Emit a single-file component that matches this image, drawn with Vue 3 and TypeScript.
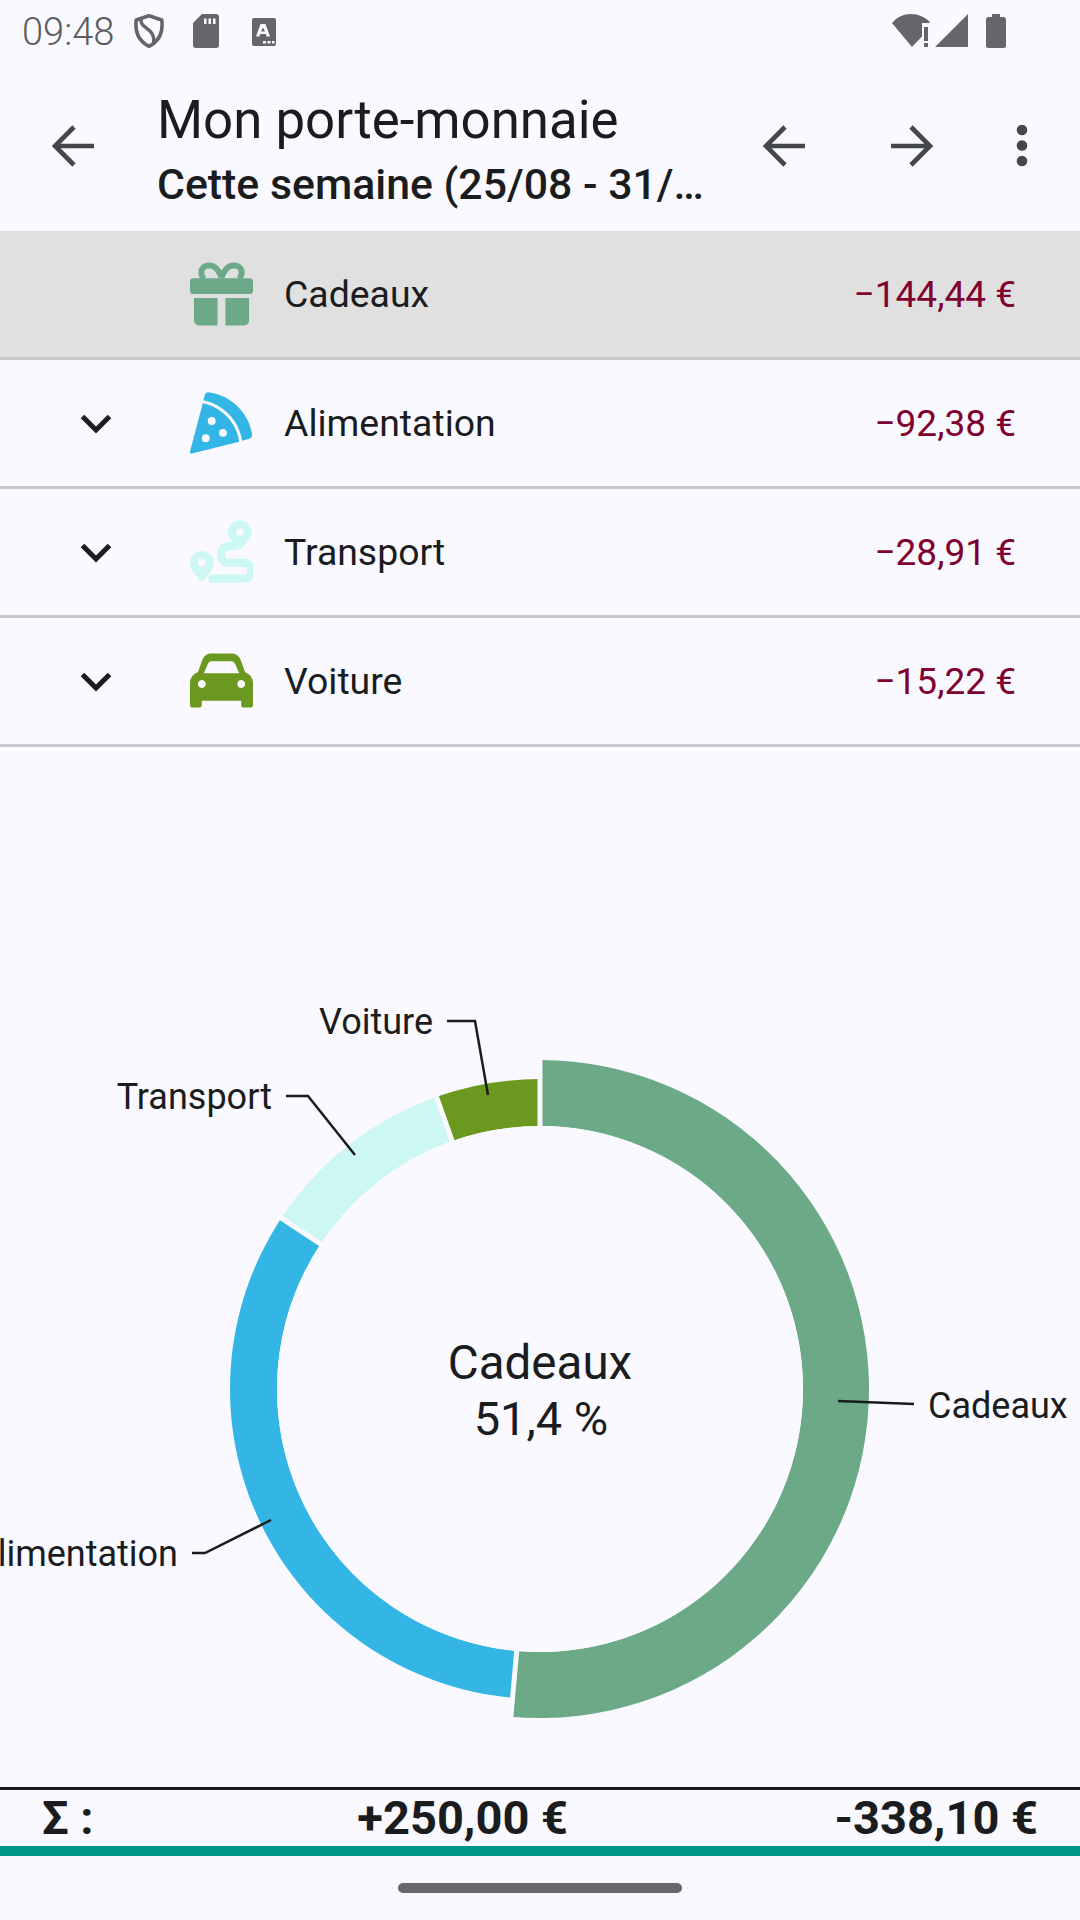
<script setup lang="ts">
interface Slice { label: string; color: string; from: number; to: number; outer: number }

const total = 144.44 + 92.38 + 28.91 + 15.22
const cx = 540
const cy = 1389
const inner = 263

function polar(r: number, deg: number): [number, number] {
  const a = (deg * Math.PI) / 180
  return [cx + r * Math.sin(a), cy - r * Math.cos(a)]
}

function sector(s: Slice): string {
  const [x1, y1] = polar(s.outer, s.from)
  const [x2, y2] = polar(s.outer, s.to)
  const [x3, y3] = polar(inner, s.to)
  const [x4, y4] = polar(inner, s.from)
  const large = s.to - s.from > 180 ? 1 : 0
  return `M${x1} ${y1}A${s.outer} ${s.outer} 0 ${large} 1 ${x2} ${y2}L${x3} ${y3}A${inner} ${inner} 0 ${large} 0 ${x4} ${y4}Z`
}

const raw = [
  { label: 'Cadeaux', color: '#6ca987', value: 144.44, outer: 329 },
  { label: 'Alimentation', color: '#33b5e5', value: 92.38, outer: 310 },
  { label: 'Transport', color: '#ccf7f3', value: 28.91, outer: 310 },
  { label: 'Voiture', color: '#6b981f', value: 15.22, outer: 310 },
]
let acc = 0
const slices: Slice[] = raw.map((r) => {
  const from = acc
  acc += (r.value / total) * 360
  return { label: r.label, color: r.color, from, to: acc, outer: r.outer }
})
const paths = slices.map((s) => ({ d: sector(s), color: s.color, key: s.label }))
const gaps = slices.map((s) => {
  const [x, y] = polar(340, s.from)
  return { x, y, key: s.label }
})

const rows = [
  { name: 'Cadeaux', amount: '−144,44 €', icon: 'gift', selected: true },
  { name: 'Alimentation', amount: '−92,38 €', icon: 'pizza', selected: false },
  { name: 'Transport', amount: '−28,91 €', icon: 'route', selected: false },
  { name: 'Voiture', amount: '−15,22 €', icon: 'car', selected: false },
]
</script>

<template>
  <div class="page">
    <header class="status">
      <span class="time">09:48</span>
      <svg class="st shield" viewBox="0 0 30 34"><path d="M15 1.800 27.800 6C29 16 27.500 26 15 32.300 2.500 26 1 16 2.200 6Z" fill="none" stroke="#66666a" stroke-width="3.600" stroke-linejoin="round"/><path d="M7 5C5.500 15 22 13 19.500 30" fill="none" stroke="#66666a" stroke-width="3.400"/></svg>
      <svg class="st sd" viewBox="0 0 26 34"><path d="M9 0H23a3 3 0 0 1 3 3V31a3 3 0 0 1-3 3H3a3 3 0 0 1-3-3V9Z" fill="#66666a"/><path d="M11 4.500h2.500V10H11zM15.500 4.500H18V10h-2.500zM20 4.500h2.500V10H20z" fill="#f9f9ff"/></svg>
      <svg class="st acc" viewBox="0 0 24 28"><rect width="24" height="28" rx="2" fill="#66666a"/><path d="M8.500 6h5L18 18.500h-3.400l-.8-2.500H8.200l-.8 2.500H4Zm2.500 3.500L9 13.500h4Z" fill="#f9f9ff"/><path d="M11 23h3v2.500h-3zM15.500 23h3v2.500h-3zM20 23h2.500v2.500H20z" fill="#f9f9ff"/></svg>
      <span class="spacer"></span>
      <svg class="st wifi" viewBox="0 0 40 33"><path d="M0 9C5 3 12 0 19 0C26 0 33 3 38 8L37 9H30V22.500L20 33Z" fill="#66666a"/><path d="M32 13h4v14h-4zM32 29h4v4h-4z" fill="#66666a"/></svg>
      <svg class="st signal" viewBox="0 0 33 33"><path d="M33 0V33H0Z" fill="#66666a"/></svg>
      <svg class="st battery" viewBox="0 0 20 34"><path d="M6 0h8v3h3.500A2.500 2.500 0 0 1 20 5.500V31.500A2.500 2.500 0 0 1 17.500 34H2.500A2.500 2.500 0 0 1 0 31.500V5.500A2.500 2.500 0 0 1 2.500 3H6Z" fill="#66666a"/></svg>
    </header>

    <div class="toolbar">
      <button class="tool back">
        <svg viewBox="0 0 44 44"><path d="M42 22H4M22 3 3 22l19 19" fill="none" stroke="#44474e" stroke-width="4.600"/></svg>
      </button>
      <div class="titles">
        <div class="title">Mon porte-monnaie</div>
        <div class="subtitle">Cette semaine (25/08 - 31/08/2025)</div>
      </div>
      <button class="tool prev">
        <svg viewBox="0 0 44 44"><path d="M42 22H4M22 3 3 22l19 19" fill="none" stroke="#44474e" stroke-width="4.600"/></svg>
      </button>
      <button class="tool next">
        <svg viewBox="0 0 44 44"><path d="M2 22H40M22 3l19 19-19 19" fill="none" stroke="#44474e" stroke-width="4.600"/></svg>
      </button>
      <button class="tool more">
        <svg viewBox="0 0 44 44"><circle cx="22" cy="6" r="5.300" fill="#44474e"/><circle cx="22" cy="21.500" r="5.300" fill="#44474e"/><circle cx="22" cy="37" r="5.300" fill="#44474e"/></svg>
      </button>
    </div>

    <section class="list">
      <div v-for="row in rows" :key="row.name" class="row" :class="{ selected: row.selected }">
        <div class="chev">
          <svg v-if="!row.selected" viewBox="0 0 32 20"><path d="M2.500 2.500 16 16 29.500 2.500" fill="none" stroke="#1a1c1e" stroke-width="5"/></svg>
        </div>
        <div class="cat">
          <svg v-if="row.icon === 'gift'" viewBox="0 0 64 64">
            <path d="M32 15C29 8 26 3 19.500 3 14 3 11.500 6.500 11.500 10c0 3 1 5 3 6.500M32 15C35 8 38 3 44.500 3 50 3 52.500 6.500 52.500 10c0 3-1 5-3 6.500" fill="none" stroke="#6ca987" stroke-width="6"/>
            <rect x="0" y="16" width="64" height="16" rx="3" fill="#6ca987"/>
            <path d="M4 36H28V64H9a5 5 0 0 1-5-5ZM36 36H60V59a5 5 0 0 1-5 5H36Z" fill="#6ca987"/>
          </svg>
          <svg v-else-if="row.icon === 'pizza'" viewBox="0 0 64 64">
            <path d="M15 4Q16 0 20 1C42 4 60 22 63 43Q63.500 47 60 48L53 50C50 30 34 13 13.500 9Z" fill="#33b5e5"/>
            <path d="M13 12C32 16 47 31 50 51L2 63Q-.5 63 0 61Z" fill="#33b5e5"/>
            <circle cx="22" cy="30" r="4" fill="#f9f9ff"/><circle cx="33.500" cy="42" r="4" fill="#f9f9ff"/><circle cx="16" cy="47.500" r="4" fill="#f9f9ff"/>
          </svg>
          <svg v-else-if="row.icon === 'route'" viewBox="0 0 64 64">
            <path d="M50.500 0A12 12 0 0 0 38.500 12C38.500 18 44 24 50.500 30 57 24 62.500 18 62.500 12A12 12 0 0 0 50.500 0ZM50.500 8a4 4 0 1 1 0 8 4 4 0 0 1 0-8Z" fill="#ccf7f3" fill-rule="evenodd"/>
            <path d="M12 31A12 12 0 0 0 0 43C0 49 5.500 56 12 63 18.500 56 24 49 24 43A12 12 0 0 0 12 31ZM12 39a4 4 0 1 1 0 8 4 4 0 0 1 0-8Z" fill="#ccf7f3" fill-rule="evenodd"/>
            <path d="M48 26H39C29 26 29 43 39 43H55C65 43 65 59 55 59H19" fill="none" stroke="#ccf7f3" stroke-width="8.500"/>
          </svg>
          <svg v-else viewBox="0 0 64 64">
            <path fill-rule="evenodd" d="M22 4H42C47 4 50 6.500 52 12L56 23C61 25 64 29 64 34V52H0V34C0 29 3 25 8 23L12 12C14 6.500 17 4 22 4ZM22 12C20 12 19 13 18 15L14 24H50L46 15C45 13 44 12 42 12ZM12 31a4 4 0 1 0 .01 0ZM52 31a4 4 0 1 0 .01 0Z" fill="#6b981f"/>
            <path d="M0 50H12V56a3 3 0 0 1-3 3H3a3 3 0 0 1-3-3ZM52 50H64V56a3 3 0 0 1-3 3H55a3 3 0 0 1-3-3Z" fill="#6b981f"/>
          </svg>
        </div>
        <span class="name">{{ row.name }}</span>
        <span class="amount">{{ row.amount }}</span>
      </div>
    </section>

    <svg class="chart" viewBox="0 747 1080 1040">
      <path v-for="p in paths" :key="p.key" :d="p.d" :fill="p.color" />
      <line v-for="g in gaps" :key="g.key" :x1="cx" :y1="cy" :x2="g.x" :y2="g.y" stroke="#f9f9ff" stroke-width="5" />
      <circle :cx="cx" :cy="cy" :r="inner" fill="#f9f9ff" />
      <g class="leaders" fill="none" stroke="#1a1c1e" stroke-width="2.500">
        <polyline points="447,1021 475,1021 488,1095" />
        <polyline points="286,1096 308,1096 355,1155" />
        <polyline points="192,1553 205,1553 271,1520" />
        <polyline points="838,1401 914,1404" />
      </g>
      <g class="labels">
        <text x="433" y="1034" text-anchor="end">Voiture</text>
        <text x="272" y="1109" text-anchor="end">Transport</text>
        <text x="178" y="1566" text-anchor="end">Alimentation</text>
        <text x="928" y="1418">Cadeaux</text>
      </g>
      <g class="center" text-anchor="middle">
        <text x="540" y="1379">Cadeaux</text>
        <text x="541" y="1435" class="pct">51,4 %</text>
      </g>
    </svg>

    <footer class="totals">
      <span>Σ :</span>
      <span class="num">+250,00 €</span>
      <span class="num">-338,10 €</span>
    </footer>
    <div class="teal"></div>
    <div class="nav"><span class="handle"></span></div>
  </div>
</template>

<style>
html, body { margin: 0; background: #f9f9ff; }
</style>

<style scoped>
.page {
  width: 1080px;
  height: 1920px;
  display: flex;
  flex-direction: column;
  background: #f9f9ff;
  color: #1a1c1e;
  font-family: Roboto, "Noto Sans", sans-serif;
  overflow: hidden;
}
.status {
  height: 64px;
  flex: none;
  display: flex;
  align-items: flex-start;
  padding: 14px 0 0 22px;
  box-sizing: border-box;
}
.time { font-size: 38px; line-height: 36px; font-weight: 300; color: #5a5c61; width: 112px; }
.st { display: block; flex: none; }
.shield { width: 30px; height: 34px; }
.sd { width: 26px; height: 34px; margin-left: 29px; }
.acc { width: 24px; height: 28px; margin: 4px 0 0 33px; }
.spacer { flex: 1; }
.wifi { width: 40px; height: 33px; }
.signal { width: 33px; height: 33px; margin-left: 3px; }
.battery { width: 20px; height: 34px; margin: 0 74px 0 18px; }

.toolbar {
  height: 167px;
  flex: none;
  display: flex;
  align-items: center;
}
.tool {
  border: 0;
  background: none;
  padding: 0;
  width: 44px;
  height: 44px;
  flex: none;
  display: block;
  margin-bottom: 3px;
}
.tool svg { display: block; width: 44px; height: 44px; }
.back { margin-left: 52px; }
.titles { width: 554px; margin-left: 61px; flex: none; padding-top: 9px; }
.title { font-size: 52.8px; line-height: 64px; }
.subtitle {
  font-size: 42.8px;
  line-height: 64px;
  font-weight: 500;
  white-space: nowrap;
  overflow: hidden;
  text-overflow: ellipsis;
}
.prev { margin-left: 52px; }
.next { margin-left: 82px; }
.more { margin-left: 67px; }

.row {
  height: 129px;
  box-sizing: border-box;
  border-bottom: 3px solid #c8c8cc;
  display: flex;
  align-items: center;
}
.row.selected { background: #e0e0e0; }
.chev { width: 32px; margin: 2px 0 0 80px; flex: none; }
.chev svg { display: block; width: 32px; height: 20px; }
.cat { width: 63px; height: 64px; margin-left: 78px; flex: none; }
.cat svg { display: block; width: 63px; height: 64px; }
.name { font-size: 37.4px; margin-left: 31px; flex: 1; }
.amount { font-size: 37px; color: #80002f; margin-right: 64px; }

.chart { flex: 1; min-height: 0; width: 1080px; display: block; }
.labels text { font-size: 36px; fill: #1a1c1e; }
.center text { font-size: 47.5px; fill: #1a1c1e; }
.center .pct { font-size: 47px; }

.totals {
  height: 59px;
  flex: none;
  box-sizing: border-box;
  border-top: 3px solid #1a1c1e;
  display: grid;
  grid-template-columns: 1fr 470px 470px;
  align-items: center;
  padding: 0 42px 0 42px;
  font-size: 47px;
  line-height: 56px;
  font-weight: 700;
}
.num { text-align: right; }
.teal { height: 10px; flex: none; background: #009688; }
.nav { height: 64px; flex: none; display: flex; justify-content: center; padding-top: 27px; box-sizing: border-box; }
.handle { width: 284px; height: 10px; border-radius: 5px; background: #68686c; }
</style>
